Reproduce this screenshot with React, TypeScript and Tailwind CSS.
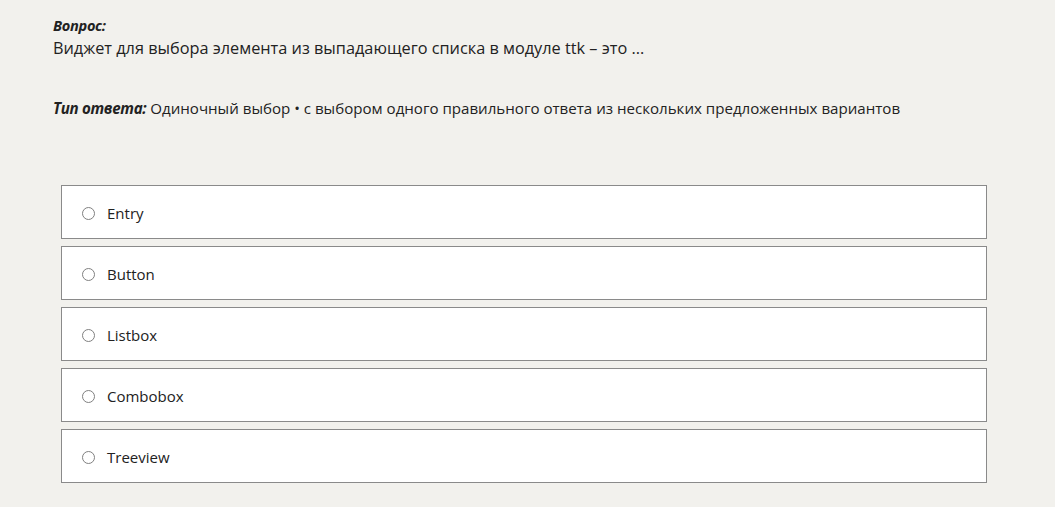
const options = ['Entry', 'Button', 'Listbox', 'Combobox', 'Treeview'];

export default function App() {
  return (
    <div className="min-h-[507px] w-full bg-[#f2f1ed] text-[#222] font-['Open_Sans','Noto_Sans',sans-serif]">
      <div className="pl-[53px] pt-[15px]">
        <div className="text-[14.6px] font-bold italic leading-[20px] tracking-[-0.3px]">Вопрос:</div>
        <div className="text-[16.3px] leading-[26px]">
          Виджет для выбора элемента из выпадающего списка в модуле ttk – это ...
        </div>
        <div className="text-[15.1px] leading-[22px] mt-[36px]">
          <span className="font-bold italic tracking-[-0.3px]">Тип ответа:</span> Одиночный выбор • с выбором одного
          правильного ответа из нескольких предложенных вариантов
        </div>
      </div>
      <div className="ml-[61px] w-[926px] mt-[66px] flex flex-col gap-[7px]">
        {options.map((o) => (
          <label
            key={o}
            className="h-[54px] bg-white border border-[#8a8a8a] flex items-center pl-[20px] pt-[3px]"
          >
            <span className="w-[13px] h-[13px] rounded-full border border-[#808080] bg-white" />
            <span className="ml-[12px] text-[15px]">{o}</span>
          </label>
        ))}
      </div>
    </div>
  );
}
